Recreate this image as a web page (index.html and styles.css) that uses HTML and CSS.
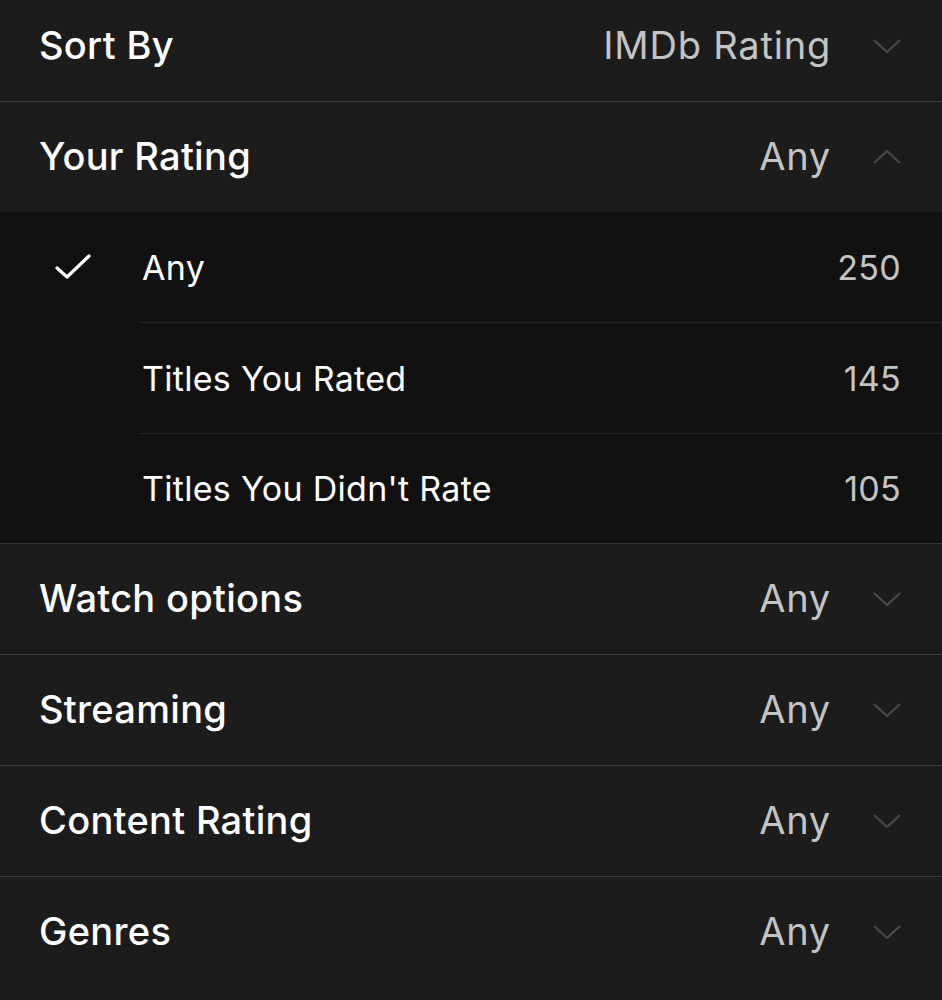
FILE: index.html
```html
<!DOCTYPE html>
<html lang="en">
<head>
    <meta charset="UTF-8">
    <meta name="viewport" content="width=device-width, initial-scale=1.0">
    <title>Filters</title>
    <link rel="stylesheet" href="styles.css">
</head>
<body>
    <div class="filters">
        <div class="filter-row">
            <span class="filter-label">Sort By</span>
            <span class="filter-value">IMDb Rating</span>
            <svg class="chevron" viewBox="0 0 28 14"><path d="M1 1 L14 13 L27 1"/></svg>
        </div>

        <div class="filter-row">
            <span class="filter-label">Your Rating</span>
            <span class="filter-value">Any</span>
            <svg class="chevron" viewBox="0 0 28 14"><path d="M1 13 L14 1 L27 13"/></svg>
        </div>

        <div class="options">
            <div class="option">
                <span class="check">
                    <svg viewBox="0 0 36 26"><path d="M2 14 L12 23 L34 2"/></svg>
                </span>
                <span class="option-label">Any</span>
                <span class="option-count">250</span>
            </div>
            <div class="option">
                <span class="check"></span>
                <span class="option-label">Titles You Rated</span>
                <span class="option-count">145</span>
            </div>
            <div class="option">
                <span class="check"></span>
                <span class="option-label">Titles You Didn't Rate</span>
                <span class="option-count">105</span>
            </div>
        </div>

        <div class="filter-row">
            <span class="filter-label">Watch options</span>
            <span class="filter-value">Any</span>
            <svg class="chevron" viewBox="0 0 28 14"><path d="M1 1 L14 13 L27 1"/></svg>
        </div>

        <div class="filter-row">
            <span class="filter-label">Streaming</span>
            <span class="filter-value">Any</span>
            <svg class="chevron" viewBox="0 0 28 14"><path d="M1 1 L14 13 L27 1"/></svg>
        </div>

        <div class="filter-row">
            <span class="filter-label">Content Rating</span>
            <span class="filter-value">Any</span>
            <svg class="chevron" viewBox="0 0 28 14"><path d="M1 1 L14 13 L27 1"/></svg>
        </div>

        <div class="filter-row">
            <span class="filter-label">Genres</span>
            <span class="filter-value">Any</span>
            <svg class="chevron" viewBox="0 0 28 14"><path d="M1 1 L14 13 L27 1"/></svg>
        </div>
    </div>
</body>
</html>
```

FILE: styles.css
```css
body {
    margin: 0;
    background: #1c1c1c;
    font-family: Inter, "Open Sans", sans-serif;
    color: #fff;
    overflow: hidden;
}
.filters {
    margin-top: -9px;
}
.filter-row {
    display: flex;
    align-items: center;
    height: 110px;
    padding: 0 41px 0 39px;
    border-bottom: 1px solid #3a3a3a;
}
.filter-row:last-child {
    border-bottom: none;
}
.filter-label {
    flex: 1;
    font-size: 38px;
    font-weight: 500;
    letter-spacing: 0.3px;
    margin-top: -3px;
}
.filter-value {
    font-size: 38px;
    letter-spacing: 0.8px;
    color: #c4c4c4;
    margin-right: 42px;
    margin-top: -3px;
}
.chevron {
    width: 28px;
    height: 14px;
    fill: none;
    stroke: #4a4a4a;
    stroke-width: 2.2;
}
.options {
    background: #111;
    border-bottom: 1px solid #343434;
    margin-top: -1px;
}
.option {
    display: flex;
    align-items: center;
    height: 110px;
}
.option:last-child {
    height: 109px;
}
.option + .option {
    border-top: 1px solid #262626;
    margin-left: 139px;
}
.option + .option .check {
    display: none;
}
.check {
    width: 139px;
    padding-left: 55px;
    box-sizing: border-box;
    display: flex;
}
.check svg {
    width: 36px;
    height: 26px;
    fill: none;
    stroke: #fff;
    stroke-width: 3.2;
    stroke-linecap: round;
    stroke-linejoin: round;
}
.option-label {
    flex: 1;
    font-size: 34px;
    letter-spacing: 0.3px;
    padding-left: 3px;
}
.option-count {
    font-size: 34px;
    letter-spacing: 0.3px;
    color: #c4c4c4;
    padding-right: 41px;
}
```
